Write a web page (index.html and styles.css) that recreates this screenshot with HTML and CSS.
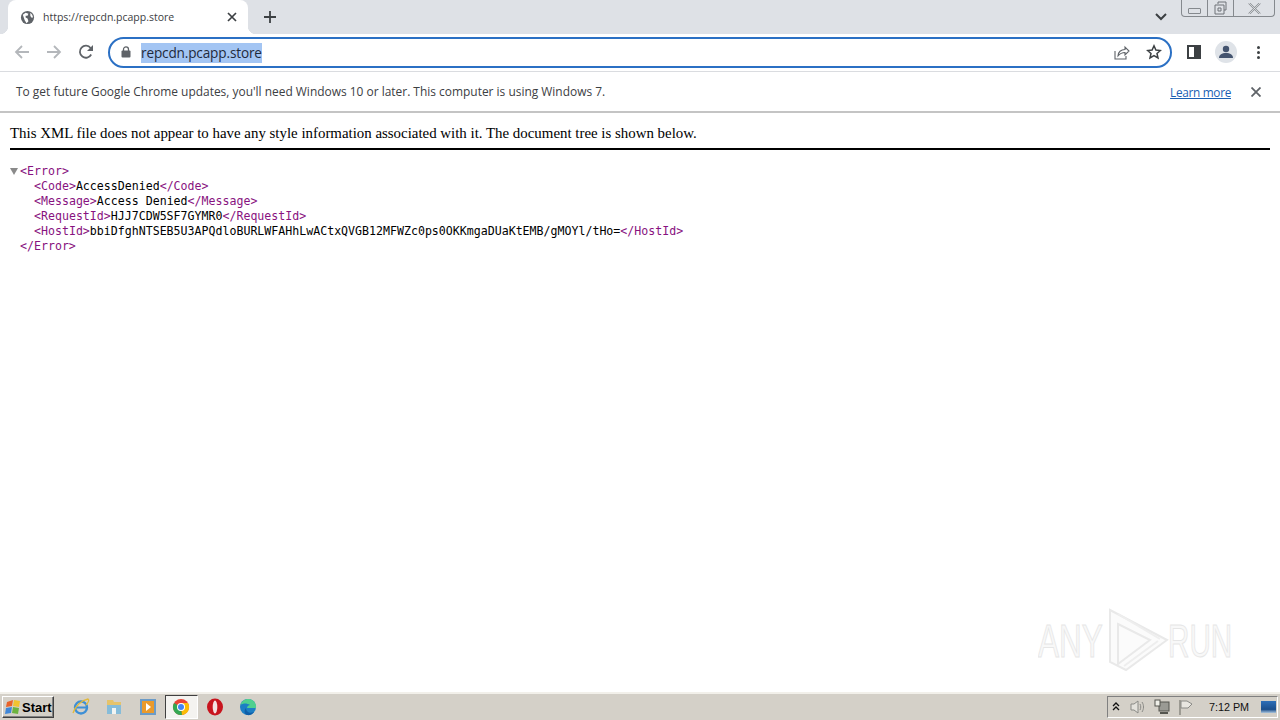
FILE: index.html
```html
<!DOCTYPE html>
<html lang="en">
<head>
    <meta charset="UTF-8">
    <title>https://repcdn.pcapp.store</title>
    <link rel="stylesheet" href="styles.css">
</head>
<body>
    <!-- Tab strip -->
    <div class="tab-strip">
        <div class="tab">
            <svg class="favicon" width="16" height="16" viewBox="0 0 16 16">
                <circle cx="8" cy="8" r="7" fill="#5f6368"/>
                <path d="M3 5l3-2 3 1-1 2-2 0 0 2 2 1 1 3-2 2-2-3-1-3zM11 3l2 2 1 3-2 0-1-2z" fill="#fff"/>
            </svg>
            <span class="tab-title">https://repcdn.pcapp.store</span>
            <svg class="tab-close" width="10" height="10" viewBox="0 0 10 10">
                <path d="M1 1l8 8M9 1l-8 8" stroke="#3c4043" stroke-width="1.7"/>
            </svg>
        </div>
        <svg class="new-tab" width="12" height="12" viewBox="0 0 12 12">
            <path d="M6 0v12M0 6h12" stroke="#3c4043" stroke-width="1.8"/>
        </svg>
        <svg class="tab-search" width="12" height="8" viewBox="0 0 12 8">
            <path d="M1 1l5 5 5-5" fill="none" stroke="#3c4043" stroke-width="2"/>
        </svg>
        <div class="window-buttons">
            <span class="win-btn win-min"><i></i></span>
            <span class="win-btn win-max">
                <svg width="14" height="14" viewBox="0 0 14 14">
                    <path d="M4 3V1h8v8h-2M1 4h9v9H1zM4 7h3v3H4z" fill="none" stroke="#6f7378"/>
                </svg>
            </span>
            <span class="win-btn win-close">
                <svg width="13" height="11" viewBox="0 0 13 11">
                    <path d="M1 0l11 11M12 0L1 11" stroke="#8b8f94" stroke-width="2"/>
                    <path d="M1 0l11 11M12 0L1 11" stroke="#eef0f2" stroke-width=".7"/>
                </svg>
            </span>
        </div>
    </div>

    <!-- Toolbar -->
    <div class="toolbar">
        <svg class="nav-icon" width="16" height="14" viewBox="0 0 16 14">
            <path d="M15 7H2M8 1L2 7l6 6" fill="none" stroke="#b4b7bb" stroke-width="1.8"/>
        </svg>
        <svg class="nav-icon" width="16" height="14" viewBox="0 0 16 14">
            <path d="M1 7h13M8 1l6 6-6 6" fill="none" stroke="#b4b7bb" stroke-width="1.8"/>
        </svg>
        <svg class="reload" width="16" height="16" viewBox="0 0 16 16">
            <path d="M13.2 10.5A6 6 0 1 1 12.6 4" fill="none" stroke="#5f6368" stroke-width="1.8"/>
            <path d="M15 1v6H9z" fill="#5f6368"/>
        </svg>
        <div class="omnibox">
            <svg class="lock" width="10" height="12" viewBox="0 0 10 12">
                <path d="M2.5 5V3.4a2.5 2.5 0 0 1 5 0V5" fill="none" stroke="#5f6368" stroke-width="1.3"/>
                <rect x="0.5" y="4.6" width="9" height="7" rx="1" fill="#5f6368"/>
            </svg>
            <div class="url"><span class="url-selected">repcdn.pcapp.store</span></div>
            <svg class="share" width="16" height="16" viewBox="0 0 16 16">
                <path d="M1 7v8h11v-3" fill="none" stroke="#5f6368" stroke-width="1.1"/>
                <path d="M4 12c0-4 3-6.500 7-6.500V3l4 4-4 4V8.500c-3 0-5 1-7 3.500z" fill="none" stroke="#5f6368" stroke-width="1.1"/>
            </svg>
            <svg class="star" width="16" height="16" viewBox="0 0 16 16">
                <path d="M8 1.800l1.900 4.200 4.500.5-3.400 3 1 4.500L8 11.700 4 14l1-4.500-3.400-3 4.500-.5z" fill="none" stroke="#3c4043" stroke-width="1.500"/>
            </svg>
        </div>
        <svg class="side-panel" width="14" height="14" viewBox="0 0 14 14">
            <rect x="1" y="1" width="12" height="12" fill="none" stroke="#3c4043" stroke-width="2"/>
            <rect x="7" y="1" width="6" height="12" fill="#3c4043"/>
        </svg>
        <div class="avatar">
            <svg width="14" height="14" viewBox="0 0 14 14">
                <circle cx="7" cy="4" r="3.200" fill="#44546f"/>
                <path d="M0 13c0-3.500 3-5 7-5s7 1.500 7 5z" fill="#44546f"/>
            </svg>
        </div>
        <div class="menu-dots"><i></i><i></i><i></i></div>
    </div>

    <!-- Update warning -->
    <div class="infobar">
        <span class="infobar-text">To get future Google Chrome updates, you'll need Windows 10 or later. This computer is using Windows 7.</span>
        <a class="learn-more">Learn more</a>
        <svg class="infobar-close" width="10" height="10" viewBox="0 0 10 10">
            <path d="M.5 .5l9 9M9.500 .5l-9 9" stroke="#5f6368" stroke-width="1.800"/>
        </svg>
    </div>

    <!-- XML viewer -->
    <div class="page">
        <div class="xml-header">This XML file does not appear to have any style information associated with it. The document tree is shown below.</div>
        <hr class="xml-rule">
        <div class="xml-tree">
            <div class="line"><span class="arrow"></span><span class="tag">&lt;Error&gt;</span></div>
            <div class="line child"><span class="tag">&lt;Code&gt;</span>AccessDenied<span class="tag">&lt;/Code&gt;</span></div>
            <div class="line child"><span class="tag">&lt;Message&gt;</span>Access Denied<span class="tag">&lt;/Message&gt;</span></div>
            <div class="line child"><span class="tag">&lt;RequestId&gt;</span>HJJ7CDW5SF7GYMR0<span class="tag">&lt;/RequestId&gt;</span></div>
            <div class="line child"><span class="tag">&lt;HostId&gt;</span>bbiDfghNTSEB5U3APQdloBURLWFAHhLwACtxQVGB12MFWZc0ps0OKKmgaDUaKtEMB/gMOYl/tHo=<span class="tag">&lt;/HostId&gt;</span></div>
            <div class="line"><span class="arrow-space"></span><span class="tag">&lt;/Error&gt;</span></div>
        </div>
        <svg class="watermark" width="196" height="64" viewBox="0 0 196 64">
            <text class="wm-text" transform="translate(0 49) scale(.67 1)">ANY</text>
            <path d="M72 2l57 30-41 30-16-8zM80 16l32 16-32 24z" fill="#fbfbfb" stroke="#e9e9e9" stroke-width="2"/>
            <path d="M80 6l42 25M86 58l34-25" fill="none" stroke="#eeeeee" stroke-width="2"/>
            <text class="wm-text" transform="translate(130 49) scale(.63 1)">RUN</text>
        </svg>
    </div>

    <!-- Windows taskbar -->
    <div class="taskbar">
        <div class="start-btn">
            <svg width="16" height="16" viewBox="0 0 16 16">
                <path d="M2 3l6-2-1 6-6 1z" fill="#e8622a"/>
                <path d="M9 1l6 1-1 6-6-1z" fill="#f2c230"/>
                <path d="M1 9l6-1-1 6-6 1z" fill="#3f86d8"/>
                <path d="M8 8l6 1-1 6-6-1z" fill="#6cb33f"/>
            </svg>
            <span>Start</span>
        </div>
        <div class="task-icons">
            <span class="task-icon">
                <svg width="18" height="18" viewBox="0 0 18 18">
                    <circle cx="9" cy="9.500" r="6" fill="none" stroke="#3d8fd6" stroke-width="2.400"/>
                    <path d="M3 9.500h12" stroke="#3d8fd6" stroke-width="2"/>
                    <path d="M1 15C3 8 10 2 16 1c2 1-1 5-2 6" fill="none" stroke="#e2b93b" stroke-width="1.300"/>
                </svg>
            </span>
            <span class="task-icon">
                <svg width="18" height="18" viewBox="0 0 18 18">
                    <path d="M2 2h6l1 2h7v12H2z" fill="#e6c36a"/>
                    <path d="M2 7h14v9H2z" fill="#86bcd9"/>
                    <path d="M7 10h4v6H7z" fill="#f2f4f2"/>
                </svg>
            </span>
            <span class="task-icon">
                <svg width="18" height="18" viewBox="0 0 18 18">
                    <rect x="1" y="1" width="16" height="16" fill="#6b9bc7"/>
                    <rect x="3" y="3" width="12" height="12" fill="#ea9a2c"/>
                    <path d="M7 5l5 4-5 4z" fill="#fff"/>
                </svg>
            </span>
            <span class="task-icon task-active">
                <svg width="18" height="18" viewBox="0 0 18 18">
                    <circle cx="9" cy="9" r="8" fill="#ea4335"/>
                    <path d="M9 9L2 13a8 8 0 0 0 8 4z" fill="#34a853"/>
                    <path d="M9 5h7a8 8 0 0 1-6 12z" fill="#fbbc05"/>
                    <path d="M9 9L2.100 5a8 8 0 0 0-.100 8l4 1z" fill="#34a853"/>
                    <circle cx="9" cy="9" r="4" fill="#fff"/>
                    <circle cx="9" cy="9" r="3" fill="#4285f4"/>
                </svg>
            </span>
            <span class="task-icon">
                <svg width="18" height="18" viewBox="0 0 18 18">
                    <ellipse cx="9" cy="9" rx="8" ry="8.500" fill="#c8141e"/>
                    <ellipse cx="9" cy="9" rx="2.300" ry="6.500" fill="#f4e2e2"/>
                </svg>
            </span>
            <span class="task-icon">
                <svg width="18" height="18" viewBox="0 0 18 18">
                    <circle cx="9" cy="9" r="8" fill="#1c7fc4"/>
                    <path d="M1.500 7C3 2 8 0 12 1.500c4 1.500 5.500 5 5 8.500H8c0-2 2-3 3-3-3-2-7-2-9.500 0z" fill="#4fd08f"/>
                    <path d="M7 10c0 4 4 6 8 4-2 3-5 3.500-7 3-3-1-3-5-1-7z" fill="#0f5ea8"/>
                </svg>
            </span>
        </div>
        <div class="tray">
            <svg class="tray-caret" width="8" height="10" viewBox="0 0 8 10">
                <path d="M1 4l3-3 3 3M1 8l3-3 3 3" fill="none" stroke="#111" stroke-width="1.300"/>
            </svg>
            <svg class="tray-icon" width="16" height="16" viewBox="0 0 16 16">
                <path d="M1 5h3l4-3v12l-4-3H1z" fill="#e4e2dc" stroke="#8a8a86"/>
                <path d="M10 5c1 2 1 4 0 6M12 3c2 3 2 7 0 10" fill="none" stroke="#8a8a86"/>
            </svg>
            <svg class="tray-icon" width="16" height="16" viewBox="0 0 16 16">
                <rect x="5" y="3" width="10" height="9" fill="#9a9a94" stroke="#55554f"/>
                <rect x="1" y="1" width="5" height="6" fill="#efefe8" stroke="#55554f"/>
                <path d="M6 14h8" stroke="#55554f" stroke-width="2"/>
            </svg>
            <svg class="tray-icon" width="16" height="16" viewBox="0 0 16 16">
                <path d="M2 1v15" stroke="#77776f" stroke-width="1.200"/>
                <path d="M3 2h6l5 3-4 4H3z" fill="#e8e6e0" stroke="#8a8a86"/>
            </svg>
            <span class="clock">7:12 PM</span>
            <span class="show-desktop"></span>
        </div>
    </div>
</body>
</html>
```

FILE: styles.css
```css
html, body {
    margin: 0;
    padding: 0;
    height: 100%;
}

body {
    display: flex;
    flex-direction: column;
    height: 720px;
    overflow: hidden;
    background-color: #fff;
    color: #000;
    font-family: "Open Sans", "Noto Sans", sans-serif;
}

svg {
    display: block;
    flex-shrink: 0;
}

/* Tab strip */
.tab-strip {
    display: flex;
    align-items: center;
    height: 34px;
    padding-left: 8px;
    background-color: #dee1e6;
    position: relative;
}

.tab {
    display: flex;
    align-items: center;
    box-sizing: border-box;
    width: 240px;
    height: 34px;
    padding: 0 11px 0 12px;
    background-color: #fff;
    border-radius: 8px 8px 0 0;
    position: relative;
}

.tab::before,
.tab::after {
    content: "";
    position: absolute;
    bottom: 0;
    width: 8px;
    height: 8px;
}

.tab::before {
    left: -8px;
    background: radial-gradient(circle at 0 0, transparent 8px, #fff 8.500px);
}

.tab::after {
    right: -8px;
    background: radial-gradient(circle at 100% 0, transparent 8px, #fff 8.500px);
}

.favicon {
    width: 15px;
    height: 15px;
}

.tab-title {
    flex: 1;
    margin-left: 8px;
    font-size: 10.500px;
    color: #3c4043;
    white-space: nowrap;
}

.new-tab {
    margin-left: 16px;
}

.tab-search {
    margin-left: auto;
    margin-right: 113px;
}

.window-buttons {
    display: flex;
    position: absolute;
    top: 0;
    right: 5px;
    height: 16px;
    border: 1px solid #85898e;
    border-top: none;
    border-radius: 0 0 4px 4px;
}

.win-btn {
    display: flex;
    align-items: center;
    justify-content: center;
    height: 16px;
}

.win-min {
    width: 25px;
}

.win-min i {
    display: block;
    width: 11px;
    height: 4px;
    margin-top: 5px;
    border: 1px solid #85898e;
    border-radius: 1px;
}

.win-max {
    width: 25px;
    border-left: 1px solid #85898e;
    border-right: 1px solid #85898e;
}

.win-close {
    width: 40px;
}

/* Toolbar */
.toolbar {
    display: flex;
    align-items: center;
    box-sizing: border-box;
    height: 38px;
    padding: 0 13px 1px 14px;
    border-bottom: 1px solid #dadce0;
    background-color: #fff;
}

.nav-icon {
    margin-right: 16px;
}

.reload {
    margin-right: 14px;
}

.omnibox {
    display: flex;
    align-items: center;
    box-sizing: border-box;
    width: 1064px;
    height: 31px;
    margin-right: 15px;
    padding: 0 8px 0 11px;
    border: 2px solid #2b70c4;
    border-radius: 16px;
}

.lock {
    margin-right: 10px;
}

.url {
    flex: 1;
    display: flex;
    padding-top: 1px;
}

.url-selected {
    font-size: 13.600px;
    line-height: 20px;
    color: #1f2a3c;
    letter-spacing: -0.150px;
    background-color: #a3c5f3;
}

.share {
    margin-right: 16px;
}

.side-panel {
    margin-right: 14px;
}

.avatar {
    display: flex;
    align-items: center;
    justify-content: center;
    width: 22px;
    height: 22px;
    border-radius: 50%;
    background-color: #dfe3e8;
}

.menu-dots {
    display: flex;
    flex-direction: column;
    gap: 2px;
    margin-left: 20px;
}

.menu-dots i {
    display: block;
    width: 3px;
    height: 3px;
    border-radius: 50%;
    background-color: #3c4043;
}

/* Infobar */
.infobar {
    display: flex;
    align-items: center;
    box-sizing: border-box;
    height: 41px;
    padding: 0 19px 0 16px;
    border-bottom: 2px solid #c4c4c4;
    background-color: #fff;
}

.infobar-text {
    flex: 1;
    font-size: 11.950px;
    color: #3c4043;
}

.learn-more {
    margin-right: 20px;
    font-size: 11.800px;
    letter-spacing: -0.300px;
    color: #1a5fb4;
    text-decoration: underline;
}

/* XML viewer */
.page {
    flex: 1;
    padding: 11px 10px 0;
    position: relative;
}

.xml-header {
    font-family: "Liberation Serif", serif;
    font-size: 14.900px;
    line-height: 18px;
    color: #000;
}

.xml-rule {
    height: 2px;
    margin: 6px 0 0;
    border: none;
    background-color: #000;
}

.xml-tree {
    margin-top: 14px;
    font-family: "DejaVu Sans Mono", monospace;
    font-size: 11.600px;
    line-height: 15px;
}

.line {
    display: flex;
    align-items: center;
    height: 15px;
    white-space: pre;
}

.child {
    padding-left: 24px;
}

.arrow {
    width: 0;
    height: 0;
    margin-right: 2px;
    border-left: 4px solid transparent;
    border-right: 4px solid transparent;
    border-top: 7px solid #8a8a8a;
}

.arrow-space {
    width: 10px;
}

.tag {
    color: #881280;
}

.watermark {
    position: absolute;
    right: 46px;
    bottom: 20px;
}

.wm-text {
    font-family: "Liberation Sans", sans-serif;
    font-size: 47px;
    fill: #f8f8f8;
    stroke: #e6e6e6;
    stroke-width: 1;
}

/* Windows taskbar */
.taskbar {
    display: flex;
    align-items: center;
    box-sizing: border-box;
    height: 28px;
    padding-left: 2px;
    border-top: 2px solid #f2f0ea;
    background-color: #d4d0c8;
}

.start-btn {
    display: flex;
    align-items: center;
    gap: 1px;
    box-sizing: border-box;
    width: 52px;
    height: 22px;
    padding-left: 2px;
    border: 1px solid;
    border-color: #fff #404040 #404040 #fff;
    box-shadow: inset -1px -1px 0 #808080;
    font-family: "Liberation Sans", sans-serif;
    font-size: 13px;
    font-weight: bold;
}

.task-icons {
    display: flex;
    align-items: center;
    margin-left: 10px;
}

.task-icon {
    display: flex;
    align-items: center;
    justify-content: center;
    box-sizing: border-box;
    width: 33.500px;
    height: 24px;
}

.task-active {
    background-color: #f4f3f0;
    border: 1px solid;
    border-color: #404040 #fff #fff #404040;
}

.tray {
    display: flex;
    align-items: center;
    box-sizing: border-box;
    height: 22px;
    margin-left: auto;
    margin-right: 2px;
    padding-left: 4px;
    border: 1px solid;
    border-color: #808080 #fff #fff #808080;
}

.tray-caret {
    margin-right: 10px;
}

.tray-icon {
    margin-right: 8px;
}

.clock {
    width: 44px;
    margin-left: 5px;
    font-family: "Liberation Sans", sans-serif;
    font-size: 10.800px;
    text-align: center;
    color: #111;
}

.show-desktop {
    display: block;
    width: 15px;
    height: 12px;
    margin: 0 1px 0 10px;
    background: linear-gradient(#2e6fb8, #1c4f8c 70%, #a9c4dc);
}
```
